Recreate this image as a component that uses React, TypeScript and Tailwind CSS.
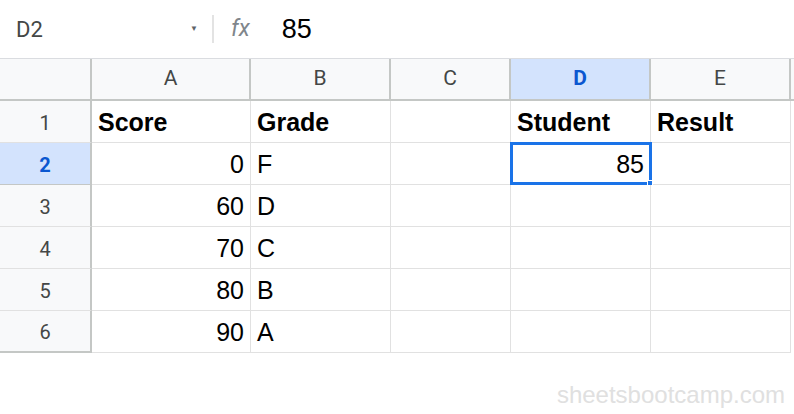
const cols = [
  { label: "A", w: "w-[159px]" },
  { label: "B", w: "w-[140px]" },
  { label: "C", w: "w-[120px]" },
  { label: "D", w: "w-[140px]" },
  { label: "E", w: "w-[140px]" },
];

const rows: { a: string; b: string; d: string; e: string; bold?: boolean }[] = [
  { a: "Score", b: "Grade", d: "Student", e: "Result", bold: true },
  { a: "0", b: "F", d: "85", e: "" },
  { a: "60", b: "D", d: "", e: "" },
  { a: "70", b: "C", d: "", e: "" },
  { a: "80", b: "B", d: "", e: "" },
  { a: "90", b: "A", d: "", e: "" },
];

export default function App() {
  return (
    <div className="relative h-[414px] w-[794px] overflow-hidden bg-white font-['Liberation_Sans',Arial,sans-serif]">
      {/* formula bar */}
      <div className="flex h-[59px] items-center border-b border-[#dadce0]">
        <div className="flex w-[212px] items-center pl-[16px] pr-[14px]">
          <span className="flex-1 font-['Roboto',sans-serif] text-[22px] text-[#444746]">D2</span>
          <span className="text-[8px] text-[#5f6368]">▼</span>
        </div>
        <div className="h-[28px] w-[2px] bg-[#e3e3e3]" />
        <span className="ml-[17px] font-['Roboto',sans-serif] text-[23px] italic text-[#80868b]">fx</span>
        <span className="ml-[32px] text-[27px] text-black">85</span>
      </div>

      {/* column headers */}
      <div className="flex h-[42px] border-b-2 border-[#c4c7c5] bg-[#f8f9fa] font-['Roboto',sans-serif]">
        <div className="w-[92px] shrink-0 border-r-2 border-[#c4c7c5]" />
        {cols.map((c) => (
          <div
            key={c.label}
            className={`${c.w} flex shrink-0 items-center justify-center border-r-2 border-[#c4c7c5] text-[21px] ${
              c.label === "D" ? "bg-[#d3e3fd] font-bold text-[#0b57d0]" : "text-[#444746]"
            }`}
          >
            {c.label}
          </div>
        ))}
      </div>

      {/* rows */}
      {rows.map((r, i) => {
        const n = i + 1;
        const sel = n === 2;
        return (
          <div key={n} className="flex h-[42px]">
            <div
              className={`flex w-[92px] shrink-0 items-center justify-center border-r-2 border-[#c4c7c5] pt-[2px] font-['Roboto',sans-serif] text-[20px] ${
                n === 6 ? "border-b-2" : "border-b"
              } ${sel ? "bg-[#d3e3fd] font-bold text-[#0b57d0]" : "bg-[#f8f9fa] text-[#444746] border-b-[#e1e1e1]"}`}
              style={n === 6 ? { borderBottomColor: "#c4c7c5" } : undefined}
            >
              {n}
            </div>
            <div
              className={`flex w-[159px] shrink-0 items-center border-b border-r border-[#e1e1e1] px-[6px] pt-[2px] text-[25px] text-black ${
                r.bold ? "justify-start font-bold" : "justify-end"
              }`}
            >
              {r.a}
            </div>
            <div
              className={`flex w-[140px] shrink-0 items-center border-b border-r border-[#e1e1e1] px-[6px] pt-[2px] text-[25px] text-black ${
                r.bold ? "font-bold" : ""
              }`}
            >
              {r.b}
            </div>
            <div className="w-[120px] shrink-0 border-b border-r border-[#e1e1e1]" />
            <div
              className={`relative flex w-[140px] shrink-0 items-center border-b border-r border-[#e1e1e1] px-[6px] pt-[2px] text-[25px] text-black ${
                r.bold ? "justify-start font-bold" : "justify-end"
              }`}
            >
              {sel && (
                <div className="absolute -left-[1px] -top-[1px] h-[43px] w-[142px] border-[3px] border-[#1a73e8]">
                  <div className="absolute -bottom-[4px] -right-[4px] h-[6px] w-[6px] border border-white bg-[#1a73e8]" />
                </div>
              )}
              <span className="relative">{r.d}</span>
            </div>
            <div
              className={`flex w-[140px] shrink-0 items-center border-b border-r border-[#e1e1e1] px-[6px] pt-[2px] text-[25px] text-black ${
                r.bold ? "font-bold" : ""
              }`}
            >
              {r.e}
            </div>
          </div>
        );
      })}

      <div className="absolute right-[9px] top-[377px] text-[24px] text-[#e0e0e0]">sheetsbootcamp.com</div>
    </div>
  );
}
